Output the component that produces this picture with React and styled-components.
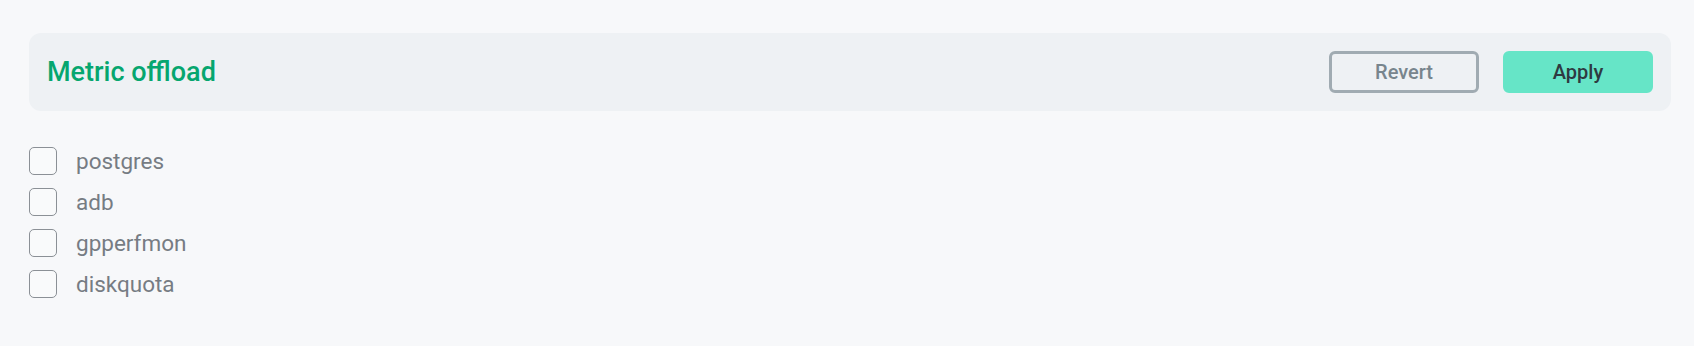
import React from "react";
import styled, { createGlobalStyle } from "styled-components";

const GlobalStyle = createGlobalStyle`
  html, body {
    margin: 0;
    padding: 0;
    background: #f7f8fa;
    font-family: Roboto, "Noto Sans", sans-serif;
  }
`;

const Page = styled.div`
  padding: 33px 23px 0 29px;
  min-height: 346px;
  box-sizing: border-box;
`;

const Header = styled.div`
  display: flex;
  align-items: center;
  justify-content: space-between;
  height: 78px;
  padding: 0 18px 0 18px;
  background: #eef1f4;
  border-radius: 12px;
`;

const Title = styled.h2`
  margin: 0;
  font-size: 27px;
  font-weight: 500;
  color: #06a66f;
`;

const Actions = styled.div`
  display: flex;
  gap: 24px;
`;

const Button = styled.button`
  width: 150px;
  height: 42px;
  box-sizing: border-box;
  border-radius: 6px;
  font-family: inherit;
  font-size: 20px;
  font-weight: 500;
  cursor: pointer;
  border: 3px solid ${(p) => (p.$primary ? "#66e5c7" : "#a0abb2")};
  background: ${(p) => (p.$primary ? "#66e5c7" : "transparent")};
  color: ${(p) => (p.$primary ? "#2e3a41" : "#78858d")};
`;

const List = styled.div`
  display: flex;
  flex-direction: column;
  gap: 13px;
  margin-top: 36px;
`;

const Item = styled.label`
  display: flex;
  align-items: center;
  gap: 19px;
  font-size: 22.5px;
  color: #767c83;
  cursor: pointer;
`;

const Box = styled.span`
  width: 28px;
  height: 28px;
  box-sizing: border-box;
  border: 1.5px solid #8b9096;
  border-radius: 5px;
  background: #f9fafb;
`;

const databases = ["postgres", "adb", "gpperfmon", "diskquota"];

export default function App() {
  return (
    <>
      <GlobalStyle />
      <Page>
        <Header>
          <Title>Metric offload</Title>
          <Actions>
            <Button>Revert</Button>
            <Button $primary>Apply</Button>
          </Actions>
        </Header>
        <List>
          {databases.map((db) => (
            <Item key={db}>
              <Box />
              {db}
            </Item>
          ))}
        </List>
      </Page>
    </>
  );
}
